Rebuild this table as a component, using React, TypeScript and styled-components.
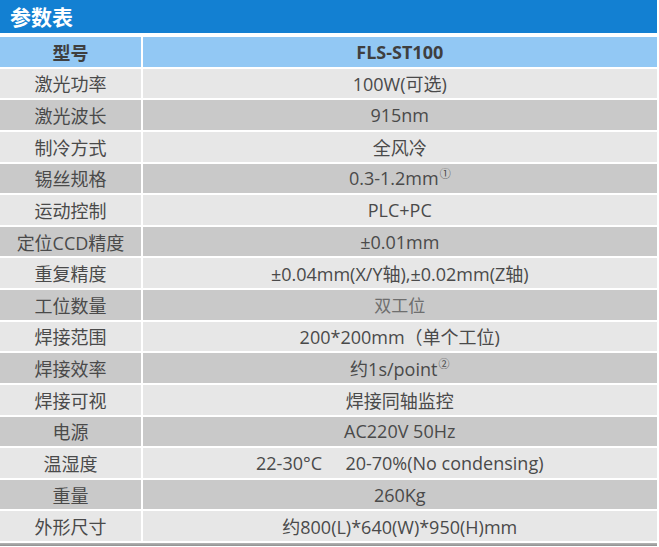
import React from "react";
import styled, {createGlobalStyle} from "styled-components";

const GlobalStyle = createGlobalStyle`
  html, body {
    margin: 0;
    padding: 0;
    background: #ffffff;
  }
  body {
    font-family: "Open Sans", "Noto Sans CJK SC", sans-serif;
  }
`;

const Sup = styled.span`
  font-size: 11px;
  position: relative;
  top: -5px;
  margin-left: 1px;
`;

interface Spec {
  name: string;
  value: React.ReactNode;
  dark: boolean;
  faint?: boolean;
}

const specs: Spec[] = [
  {name: "激光功率", value: "100W(可选)", dark: false},
  {name: "激光波长", value: "915nm", dark: true},
  {name: "制冷方式", value: "全风冷", dark: false},
  {name: "锡丝规格", value: <>0.3-1.2mm<Sup>①</Sup></>, dark: true},
  {name: "运动控制", value: "PLC+PC", dark: false},
  {name: "定位CCD精度", value: "±0.01mm", dark: true},
  {name: "重复精度", value: "±0.04mm(X/Y轴),±0.02mm(Z轴)", dark: false},
  {name: "工位数量", value: "双工位", dark: true, faint: true},
  {name: "焊接范围", value: "200*200mm（单个工位)", dark: false},
  {name: "焊接效率", value: <>约1s/point<Sup>②</Sup></>, dark: true},
  {name: "焊接可视", value: "焊接同轴监控", dark: false},
  {name: "电源", value: "AC220V 50Hz", dark: true},
  {name: "温湿度", value: "22-30°C\u00a0\u00a0\u00a0\u00a0\u00a020-70%(No condensing)", dark: false},
  {name: "重量", value: "260Kg", dark: true},
  {name: "外形尺寸", value: "约800(L)*640(W)*950(H)mm", dark: false},
];

export default function App() {
  return (
    <Page>
      <GlobalStyle/>
      <TitleBar>参数表</TitleBar>
      <Table>
        <HeadCell>型号</HeadCell>
        <HeadCell>FLS-ST100</HeadCell>
        {specs.map((row) => (
          <React.Fragment key={row.name}>
            <Cell $dark={row.dark}>{row.name}</Cell>
            <Cell $dark={row.dark} $faint={row.faint}>{row.value}</Cell>
          </React.Fragment>
        ))}
      </Table>
      <BottomEdge/>
    </Page>
  );
}

const Page = styled.div`
  width: 659px;
  height: 547px;
  overflow: hidden;
  background: #ffffff;
`;

const TitleBar = styled.div`
  height: 33px;
  width: 657px;
  background: #1380d2;
  color: #ffffff;
  font-family: "Noto Sans CJK SC", sans-serif;
  font-weight: 700;
  font-size: 21px;
  line-height: 33px;
  padding-left: 10px;
  box-sizing: border-box;
`;

const Table = styled.div`
  margin-top: 4px;
  width: 657px;
  display: grid;
  grid-template-columns: 141px 1fr;
  grid-auto-rows: 29.7px;
  column-gap: 1.5px;
  row-gap: 1.95px;
`;

const HeadCell = styled.div`
  background: #92c8f4;
  color: #3f3f3f;
  font-family: "Open Sans", "Noto Sans CJK SC", sans-serif;
  font-weight: 700;
  font-size: 18px;
  display: flex;
  align-items: center;
  justify-content: center;
`;

const Cell = styled.div<{ $dark: boolean; $faint?: boolean }>`
  background: ${p => p.$dark ? "#c9c9c9" : "#e7e7e7"};
  color: ${p => p.$faint ? "#6e6e6e" : "#4a4a4a"};
  font-family: "Open Sans", "Noto Sans CJK SC", sans-serif;
  font-size: ${p => p.$faint ? "17px" : "18px"};
  display: flex;
  align-items: center;
  justify-content: center;
  white-space: nowrap;
`;

const BottomEdge = styled.div`
  margin-top: 2px;
  width: 657px;
  height: 3px;
  background: linear-gradient(#b5b5b5, #8f8f8f);
`;
